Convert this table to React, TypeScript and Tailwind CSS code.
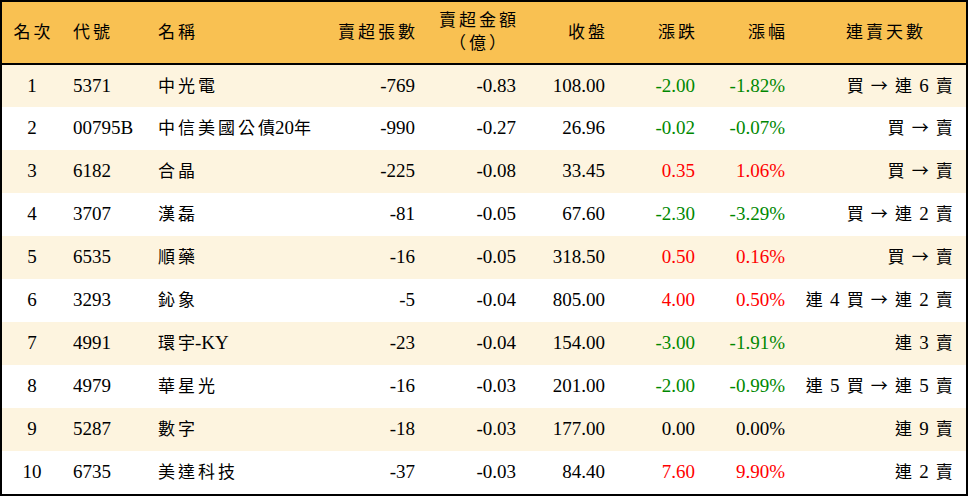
import React from "react"

type Row = {
  rank: number
  code: string
  name: string
  lots: string
  amount: string
  close: string
  change: string
  pct: string
  streak: string
}

const rows: Row[] = [
  { rank: 1, code: "5371", name: "中光電", lots: "-769", amount: "-0.83", close: "108.00", change: "-2.00", pct: "-1.82%", streak: "買 → 連 6 賣" },
  { rank: 2, code: "00795B", name: "中信美國公債20年", lots: "-990", amount: "-0.27", close: "26.96", change: "-0.02", pct: "-0.07%", streak: "買 → 賣" },
  { rank: 3, code: "6182", name: "合晶", lots: "-225", amount: "-0.08", close: "33.45", change: "0.35", pct: "1.06%", streak: "買 → 賣" },
  { rank: 4, code: "3707", name: "漢磊", lots: "-81", amount: "-0.05", close: "67.60", change: "-2.30", pct: "-3.29%", streak: "買 → 連 2 賣" },
  { rank: 5, code: "6535", name: "順藥", lots: "-16", amount: "-0.05", close: "318.50", change: "0.50", pct: "0.16%", streak: "買 → 賣" },
  { rank: 6, code: "3293", name: "鈊象", lots: "-5", amount: "-0.04", close: "805.00", change: "4.00", pct: "0.50%", streak: "連 4 買 → 連 2 賣" },
  { rank: 7, code: "4991", name: "環宇-KY", lots: "-23", amount: "-0.04", close: "154.00", change: "-3.00", pct: "-1.91%", streak: "連 3 賣" },
  { rank: 8, code: "4979", name: "華星光", lots: "-16", amount: "-0.03", close: "201.00", change: "-2.00", pct: "-0.99%", streak: "連 5 買 → 連 5 賣" },
  { rank: 9, code: "5287", name: "數字", lots: "-18", amount: "-0.03", close: "177.00", change: "0.00", pct: "0.00%", streak: "連 9 賣" },
  { rank: 10, code: "6735", name: "美達科技", lots: "-37", amount: "-0.03", close: "84.40", change: "7.60", pct: "9.90%", streak: "連 2 賣" },
]

const CJK = /[\u3400-\u9fff\u2192]/
const cjkFont = { fontFamily: '"Noto Sans CJK TC", sans-serif' }

// CJK runs get a smaller size, with tracking only between the CJK glyphs themselves
function T({ text, spaced = true }: { text: string; spaced?: boolean }) {
  const parts = text.split(/([\u3400-\u9fff\u2192]+)/).filter(Boolean)
  return (
    <>
      {parts.map((p, i) => {
        if (!CJK.test(p)) return <span key={i}>{p}</span>
        if (!spaced || p.length === 1)
          return (
            <span key={i} className="text-[17px]" style={cjkFont}>
              {p}
            </span>
          )
        return (
          <span key={i} className="text-[17px]" style={cjkFont}>
            <span className="tracking-[3px]">{p.slice(0, -1)}</span>
            {p.slice(-1)}
          </span>
        )
      })}
    </>
  )
}

function tone(v: string) {
  if (v.startsWith("-")) return "text-[#008800]"
  if (parseFloat(v) > 0) return "text-[#ff0000]"
  return "text-black"
}

export default function App() {
  return (
    <div
      className="h-[496px] w-[968px] overflow-hidden border-2 border-black bg-white text-black"
      style={{ fontFamily: '"Liberation Serif", "Noto Sans CJK TC", serif' }}
    >
      <table className="w-full table-fixed border-collapse text-[19px]">
        <colgroup>
          <col className="w-[60px]" />
          <col className="w-[88px]" />
          <col className="w-[180px]" />
          <col className="w-[100px]" />
          <col className="w-[100px]" />
          <col className="w-[90px]" />
          <col className="w-[90px]" />
          <col className="w-[90px]" />
          <col />
        </colgroup>
        <thead>
          <tr className="h-[62px] border-b-2 border-black bg-[#f9c152] text-[17px] tracking-[3px]">
            <th className="pl-[3px] text-center font-normal">名次</th>
            <th className="pl-[11px] text-left font-normal">代號</th>
            <th className="pl-[8px] text-left font-normal">名稱</th>
            <th className="pr-[12px] text-right font-normal">賣超張數</th>
            <th className="pr-[11px] text-right font-normal">
              <div className="inline-block text-center leading-[23px]">
                <div>賣超金額</div>
                <div>（億）</div>
              </div>
            </th>
            <th className="pr-[12px] text-right font-normal">收盤</th>
            <th className="pr-[12px] text-right font-normal">漲跌</th>
            <th className="pr-[12px] text-right font-normal">漲幅</th>
            <th className="pl-[6px] text-center font-normal">連賣天數</th>
          </tr>
        </thead>
        <tbody>
          {rows.map((r) => (
            <tr key={r.rank} className={r.rank % 2 === 1 ? "h-[43px] bg-[#fdf4df]" : "h-[43px] bg-white"}>
              <td className="text-center">{r.rank}</td>
              <td className="pl-[11px] text-left">{r.code}</td>
              <td className="pl-[8px] text-left whitespace-nowrap">
                <T text={r.name} />
              </td>
              <td className="pr-[15px] text-right">{r.lots}</td>
              <td className="pr-[14px] text-right">{r.amount}</td>
              <td className="pr-[15px] text-right">{r.close}</td>
              <td className={`pr-[15px] text-right ${tone(r.change)}`}>{r.change}</td>
              <td className={`pr-[15px] text-right ${tone(r.pct)}`}>{r.pct}</td>
              <td className="pr-[12px] text-right whitespace-nowrap tracking-[1.2px]">
                <T text={r.streak} spaced={false} />
              </td>
            </tr>
          ))}
        </tbody>
      </table>
    </div>
  )
}
